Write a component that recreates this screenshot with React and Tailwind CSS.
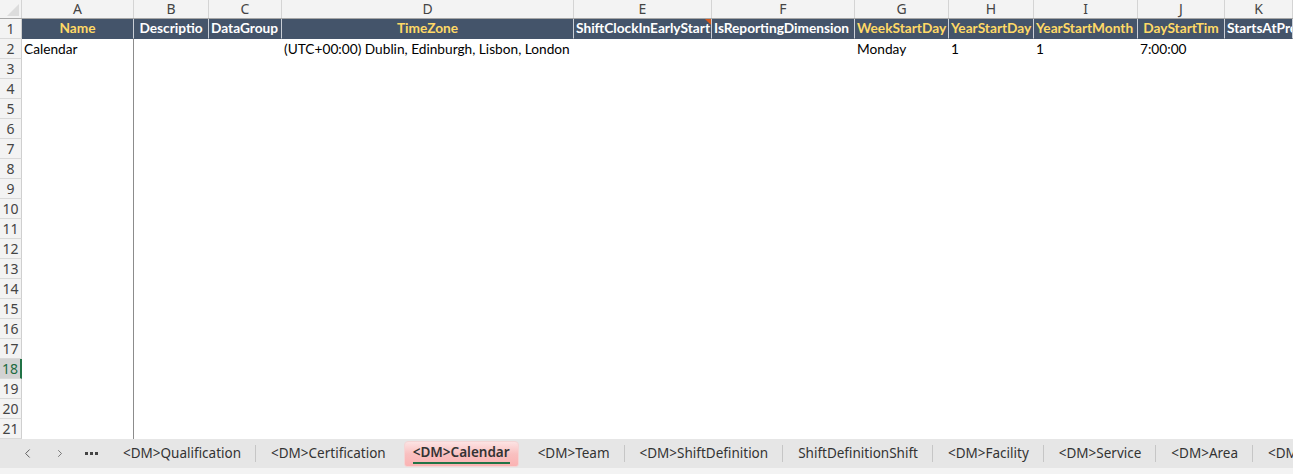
import React from 'react';
import { ChevronLeft, ChevronRight } from 'lucide-react';

const columns = [
  { letter: 'A', width: 'w-[112px]', head: 'Name', gold: true, align: 'center' },
  { letter: 'B', width: 'w-[75px]', head: 'Descriptio', gold: false, align: 'center' },
  { letter: 'C', width: 'w-[73px]', head: 'DataGroup', gold: false, align: 'left' },
  { letter: 'D', width: 'w-[292px]', head: 'TimeZone', gold: true, align: 'center' },
  { letter: 'E', width: 'w-[138px]', head: 'ShiftClockInEarlyStart', gold: false, align: 'left', comment: true },
  { letter: 'F', width: 'w-[143px]', head: 'IsReportingDimension', gold: false, align: 'left' },
  { letter: 'G', width: 'w-[94px]', head: 'WeekStartDay', gold: true, align: 'left' },
  { letter: 'H', width: 'w-[85px]', head: 'YearStartDay', gold: true, align: 'left' },
  { letter: 'I', width: 'w-[104px]', head: 'YearStartMonth', gold: true, align: 'left' },
  { letter: 'J', width: 'w-[87px]', head: 'DayStartTim', gold: true, align: 'center' },
  { letter: 'K', width: 'flex-1', head: 'StartsAtPre', gold: false, align: 'left' },
];

const rowTwo = ['Calendar', '', '', '(UTC+00:00) Dublin, Edinburgh, Lisbon, London', '', '', 'Monday', '1', '1', '7:00:00', ''];

const tabs = [
  '<DM>Qualification',
  '<DM>Certification',
  '<DM>Calendar',
  '<DM>Team',
  '<DM>ShiftDefinition',
  'ShiftDefinitionShift',
  '<DM>Facility',
  '<DM>Service',
  '<DM>Area',
  '<DM',
];

const RowNumber = ({ n, selected }) => (
  <div
    className={
      'w-[22px] shrink-0 h-full flex items-center justify-center text-[14px] border-b border-[#d9d9d9] ' +
      (selected
        ? 'bg-[#d2d2d2] text-[#1e6b41] border-r-2 border-r-[#217346]'
        : 'bg-[#f3f3f3] text-[#444] border-r border-r-[#cfcfcf]')
    }
  >
    {n}
  </div>
);

const App = () => {
  const emptyRows = [];
  for (let i = 3; i <= 21; i++) emptyRows.push(i);

  return (
    <div className="w-[1293px] h-[474px] overflow-hidden bg-white flex flex-col font-['Noto_Sans',sans-serif]">
      {/* column letters */}
      <div className="flex h-[19px] shrink-0 bg-[#f3f3f3] border-b border-[#a6a6a6]">
        <div className="w-[22px] shrink-0 border-r border-[#d4d4d4] relative overflow-hidden">
          <div className="absolute right-[2px] bottom-[2px] w-0 h-0 border-l-[12px] border-l-transparent border-b-[12px] border-b-[#dcdcdc]" />
        </div>
        {columns.map((c) => (
          <div
            key={c.letter}
            className={c.width + ' shrink-0 border-r border-[#d4d4d4] flex items-center justify-center text-[14px] text-[#444] leading-none'}
          >
            {c.letter}
          </div>
        ))}
      </div>

      {/* row 1 headers */}
      <div className="flex h-[20px] shrink-0">
        <RowNumber n={1} />
        {columns.map((c) => (
          <div
            key={c.letter}
            className={
              c.width +
              ' shrink-0 relative bg-[#44546a] border-r border-[#c9ced6] border-b border-b-[#44546a] flex items-center overflow-hidden whitespace-nowrap font-["Lato",sans-serif] font-bold text-[13.7px] ' +
              (c.gold ? 'text-[#ffd966] ' : 'text-white ') +
              (c.align === 'center' ? 'justify-center' : 'justify-start pl-[2px]')
            }
          >
            {c.head}
            {c.comment && (
              <div className="absolute right-0 top-0 w-0 h-0 border-l-[6px] border-l-transparent border-t-[6px] border-t-[#d0561b]" />
            )}
          </div>
        ))}
      </div>

      {/* row 2 data */}
      <div className="flex h-[20px] shrink-0">
        <RowNumber n={2} />
        {columns.map((c, i) => (
          <div
            key={c.letter}
            className={
              c.width +
              ' shrink-0 flex items-center pl-[2px] whitespace-nowrap font-["Lato",sans-serif] text-[13.7px] text-black ' +
              (i === 0 ? 'border-r border-[#8c8c8c]' : '')
            }
          >
            {rowTwo[i]}
          </div>
        ))}
      </div>

      {/* empty rows */}
      {emptyRows.map((n) => (
        <div key={n} className="flex h-[20px] shrink-0">
          <RowNumber n={n} selected={n === 18} />
          <div className="w-[112px] shrink-0 border-r border-[#8c8c8c]" />
          <div className="flex-1" />
        </div>
      ))}

      {/* sheet tabs */}
      <div className="flex h-[29px] shrink-0 items-center bg-[#e6e6e6] text-[13.5px] text-[#333] overflow-hidden">
        <div className="w-[54px] shrink-0 flex justify-center text-[#555]">
          <ChevronLeft size={15} strokeWidth={1.5} />
        </div>
        <div className="w-[12px] shrink-0 flex justify-center text-[#555]">
          <ChevronRight size={15} strokeWidth={1.5} />
        </div>
        <div className="ml-[14px] w-[22px] shrink-0 flex justify-center items-center gap-[2px]">
          <div className="w-[3px] h-[3px] bg-[#444]" />
          <div className="w-[3px] h-[3px] bg-[#444]" />
          <div className="w-[3px] h-[3px] bg-[#444]" />
        </div>
        <div className="w-[6px] shrink-0" />
        {tabs.map((t, i) => (
          <React.Fragment key={t}>
            {i > 0 && i !== 2 && i !== 3 && <div className="w-px h-[17px] bg-[#c6c6c6] shrink-0" />}
            {t === '<DM>Calendar' ? (
              <div className="h-[26px] mt-[1px] mx-[4px] px-[8px] shrink-0 rounded-b-[3px] rounded-t-[4px] bg-gradient-to-b from-[#fce3e3] via-[#f9c0c0] to-[#fbb3b3] border border-[#f3d5d5] flex flex-col justify-center items-center">
                <span className="font-semibold text-[#333] leading-none pt-[2px]">{t}</span>
                <div className="w-full h-[2px] bg-[#217346] mt-[3px]" />
              </div>
            ) : (
              <div className="pl-[15px] pr-[14px] shrink-0 whitespace-nowrap">{t}</div>
            )}
          </React.Fragment>
        ))}
      </div>
      <div className="flex-1 bg-[#f3f3f3]" />
    </div>
  );
};

export default App;
